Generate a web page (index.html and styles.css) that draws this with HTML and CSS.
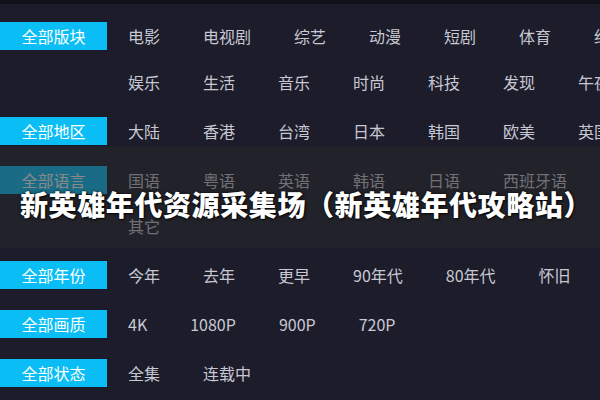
FILE: index.html
```html
<!DOCTYPE html>
<html lang="zh-CN">
<head>
<meta charset="utf-8">
<title>新英雄年代资源采集场</title>
<link rel="stylesheet" href="styles.css">
</head>
<body>
<div class="topbar"></div>
<main class="filters">
  <div class="row">
    <span class="label">全部版块</span>
    <div class="items">
      <a class="item">电影</a><a class="item">电视剧</a><a class="item">综艺</a><a class="item">动漫</a><a class="item">短剧</a><a class="item">体育</a><a class="item">纪录</a>
      <a class="item">娱乐</a><a class="item">生活</a><a class="item">音乐</a><a class="item">时尚</a><a class="item">科技</a><a class="item">发现</a><a class="item">午夜</a>
    </div>
  </div>
  <div class="row">
    <span class="label">全部地区</span>
    <div class="items">
      <a class="item">大陆</a><a class="item">香港</a><a class="item">台湾</a><a class="item">日本</a><a class="item">韩国</a><a class="item">欧美</a><a class="item">英国</a>
    </div>
  </div>
  <div class="row">
    <span class="label">全部语言</span>
    <div class="items">
      <a class="item">国语</a><a class="item">粤语</a><a class="item">英语</a><a class="item">韩语</a><a class="item">日语</a><a class="item">西班牙语</a><a class="item">其它</a>
    </div>
  </div>
  <div class="row">
    <span class="label">全部年份</span>
    <div class="items">
      <a class="item">今年</a><a class="item">去年</a><a class="item">更早</a><a class="item">90年代</a><a class="item">80年代</a><a class="item">怀旧</a>
    </div>
  </div>
  <div class="row">
    <span class="label">全部画质</span>
    <div class="items">
      <a class="item">4K</a><a class="item">1080P</a><a class="item">900P</a><a class="item">720P</a>
    </div>
  </div>
  <div class="row">
    <span class="label">全部状态</span>
    <div class="items">
      <a class="item">全集</a><a class="item">连载中</a>
    </div>
  </div>
</main>
<div class="banner">
  <h1 class="title">新英雄年代资源采集场（新英雄年代攻略站）</h1>
</div>
</body>
</html>
```
FILE: styles.css
```css
html, body {
  margin: 0;
  padding: 0;
  overflow: hidden;
}
body {
  background: #1c1c2b;
  font-family: "Noto Sans CJK SC", "Noto Sans", sans-serif;
  width: 600px;
  height: 400px;
  position: relative;
}
.topbar {
  height: 4px;
  background: #11111a;
}
.filters {
  padding-top: 18px;
  width: 640px;
}
.row {
  display: flex;
  align-items: flex-start;
  margin-bottom: 21px;
}
.label {
  flex: none;
  width: 107px;
  height: 28px;
  line-height: 28px;
  background: #0abef5;
  color: #ffffff;
  font-size: 16px;
  text-align: center;
}
.items {
  display: flex;
  flex-wrap: wrap;
  column-gap: 43px;
  row-gap: 18px;
  margin-left: 21px;
  width: 507px;
}
.item {
  font-size: 16px;
  line-height: 28px;
  height: 28px;
  color: #c8c8d2;
  white-space: nowrap;
}
.banner {
  position: absolute;
  left: 0;
  top: 147px;
  width: 600px;
  height: 101px;
  background: rgba(40, 40, 42, 0.55);
  display: flex;
  align-items: center;
}
.title {
  margin: 0 0 0 20px;
  font-size: 28px;
  font-weight: 900;
  letter-spacing: 0.6px;
  color: #ffffff;
  white-space: nowrap;
  line-height: 1;
  padding-top: 13px;
  text-shadow: 0 0 3px rgba(0, 0, 0, 0.8), 1px 1px 2px rgba(0, 0, 0, 0.7);
}
```
